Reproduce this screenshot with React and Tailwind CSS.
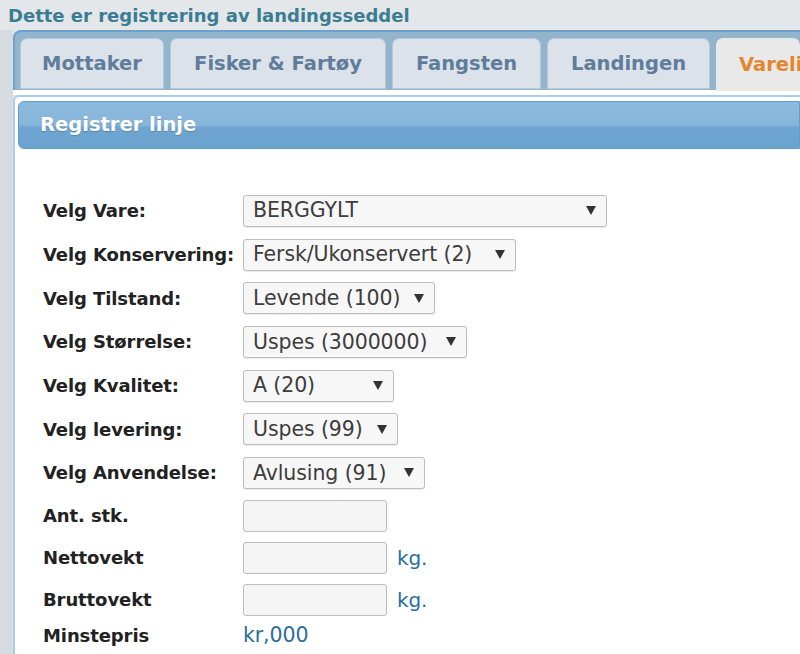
const selects = [
  { label: 'Velg Vare:', value: 'BERGGYLT', w: 'w-[364px]' },
  { label: 'Velg Konservering:', value: 'Fersk/Ukonservert (2)', w: 'w-[273px]' },
  { label: 'Velg Tilstand:', value: 'Levende (100)', w: 'w-[192px]' },
  { label: 'Velg Størrelse:', value: 'Uspes (3000000)', w: 'w-[224px]' },
  { label: 'Velg Kvalitet:', value: 'A (20)', w: 'w-[151px]' },
  { label: 'Velg levering:', value: 'Uspes (99)', w: 'w-[155px]' },
  { label: 'Velg Anvendelse:', value: 'Avlusing (91)', w: 'w-[182px]' },
];

const tabs = [
  { name: 'Mottaker', w: 'w-[144px]' },
  { name: 'Fisker & Fartøy', w: 'w-[216px]' },
  { name: 'Fangsten', w: 'w-[149px]' },
  { name: 'Landingen', w: 'w-[163px]' },
];

function Select({ value, w }) {
  return (
    <div className={`${w} h-[32px] flex items-center justify-between pl-[9px] pr-[10px] bg-[#f7f7f7] border border-[#bdbdbd] rounded-[3px] shadow-[0_1px_1px_rgba(0,0,0,0.08)] text-[20.5px] font-normal text-[#3d3d3d] whitespace-nowrap`}>
      <span>{value}</span>
      <span className="w-0 h-0 border-l-[5px] border-r-[5px] border-t-[9px] border-l-transparent border-r-transparent border-t-[#333]" />
    </div>
  );
}

function TextInput() {
  return <div className="w-[144px] h-[32px] bg-[#f5f5f5] border border-[#bdbdbd] rounded-[3px]" />;
}

function Row({ label, h, children }) {
  return (
    <div className={`flex items-center ${h}`}>
      <div className="w-[200px] shrink-0">{label}</div>
      {children}
    </div>
  );
}

export default function App() {
  return (
    <div className="w-[800px] h-[654px] overflow-hidden bg-[#e4e7e9] font-['DejaVu_Sans',sans-serif]">
      <div className="h-[30px] pl-[8px] pt-[2px] text-[18px] font-bold text-[#3a7d92] whitespace-nowrap">
        Dette er registrering av landingsseddel
      </div>
      <div className="flex">
        <div className="w-[13px] shrink-0 bg-[#d5dbe1]" />
        <div className="flex-1 min-w-0">
          <div className="h-[60px] bg-[#92b4cd] border-t-2 border-l-2 border-[#6ea2cd] rounded-tl-[8px] pl-[5px] pt-[6px] flex gap-[6px] items-stretch">
            {tabs.map((t) => (
              <div
                key={t.name}
                className={`${t.w} shrink-0 h-[51px] bg-[#dce2e9] border border-[#b7c8d8] rounded-t-[7px] flex items-center justify-center text-[19.5px] font-bold text-[#5f7d9b] whitespace-nowrap`}
              >
                {t.name}
              </div>
            ))}
            <div className="flex-1 min-w-0 overflow-hidden h-[53px] bg-[#e9e9e9] rounded-t-[7px] pl-[23px] flex items-center text-[19.5px] font-bold text-[#e4862e] whitespace-nowrap">
              Varelinjer
            </div>
          </div>
          <div className="h-[5px] bg-white" />
          <div className="bg-white border-l-2 border-t-2 border-[#a9cde8] rounded-tl-[6px] pl-[3px] pt-[4px] h-[600px]">
            <div className="h-[48px] rounded-l-[6px] border border-[#5e9fd2] bg-[linear-gradient(to_bottom,#8dbbdf_0%,#86b5da_50%,#6fa5d0_55%,#6ba3cf_100%)] flex items-center pl-[21px] text-[19.5px] font-bold text-white [text-shadow:0_1px_1px_rgba(0,0,0,0.2)]">
              Registrer linje
            </div>
            <div className="pl-[25px] pt-[40px] flex flex-col text-[18px] font-bold text-[#222] tracking-[-0.1px]">
              {selects.map((s) => (
                <Row key={s.label} label={s.label} h="h-[43.7px]">
                  <Select value={s.value} w={s.w} />
                </Row>
              ))}
              <Row label="Ant. stk." h="h-[42px]">
                <TextInput />
              </Row>
              <Row label="Nettovekt" h="h-[42px]">
                <TextInput />
                <span className="ml-[10px] font-normal text-[20px] text-[#2a6f9c]">kg.</span>
              </Row>
              <Row label="Bruttovekt" h="h-[42px]">
                <TextInput />
                <span className="ml-[10px] font-normal text-[20px] text-[#2a6f9c]">kg.</span>
              </Row>
              <Row label="Minstepris" h="h-[30px]">
                <span className="font-normal text-[20.5px] text-[#2a6f9c]">kr,000</span>
              </Row>
            </div>
          </div>
        </div>
      </div>
    </div>
  );
}
